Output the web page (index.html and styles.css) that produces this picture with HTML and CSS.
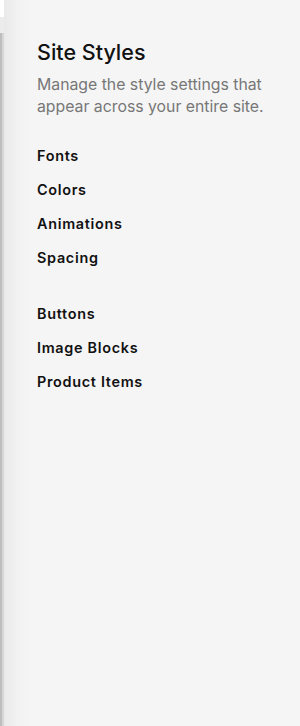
FILE: index.html
```html
<!DOCTYPE html>
<html>
<head>
<meta charset="utf-8">
<link rel="stylesheet" href="styles.css">
</head>
<body>
<div class="frame">
  <div class="edge">
    <div class="edge-top"></div>
    <div class="edge-mid"></div>
    <div class="edge-bar"></div>
  </div>
  <div class="panel">
    <h1 class="title">Site Styles</h1>
    <p class="desc">Manage the style settings that appear across your entire site.</p>
    <ul class="menu">
      <li>Fonts</li>
      <li>Colors</li>
      <li>Animations</li>
      <li>Spacing</li>
    </ul>
    <ul class="menu second">
      <li>Buttons</li>
      <li>Image Blocks</li>
      <li>Product Items</li>
    </ul>
  </div>
</div>
</body>
</html>
```
FILE: styles.css
```css
html, body { margin: 0; padding: 0; }
body { width: 300px; height: 726px; overflow: hidden; background: #f5f5f5; font-family: "Inter", "Liberation Sans", sans-serif; }
.frame { display: flex; height: 726px; }
.edge { width: 4px; display: flex; flex-direction: column; flex-shrink: 0; }
.edge-top { height: 17px; background: #ffffff; }
.edge-mid { height: 16px; background: #ececec; }
.edge-bar { flex: 1; background: linear-gradient(to right, #bdbdbd 0 2px, #d6d6d6 2px 4px); }
.panel { flex: 1; background: linear-gradient(to right, #e9e9e9 0, #f2f2f2 14px, #f5f5f5 28px); padding: 38px 20px 0 33px; }
.title { margin: 0; font-size: 21.5px; font-weight: 500; color: #111; line-height: 28px; }
.desc { margin: 8px 0 0; font-size: 15.8px; line-height: 22px; color: #777; }
.menu { list-style: none; margin: 29px 0 0; padding: 0; display: flex; flex-direction: column; gap: 16px; }
.menu li { font-size: 14.4px; font-weight: 600; color: #111; line-height: 18px; letter-spacing: 0.7px; }
.menu.second { margin-top: 38px; }
```
